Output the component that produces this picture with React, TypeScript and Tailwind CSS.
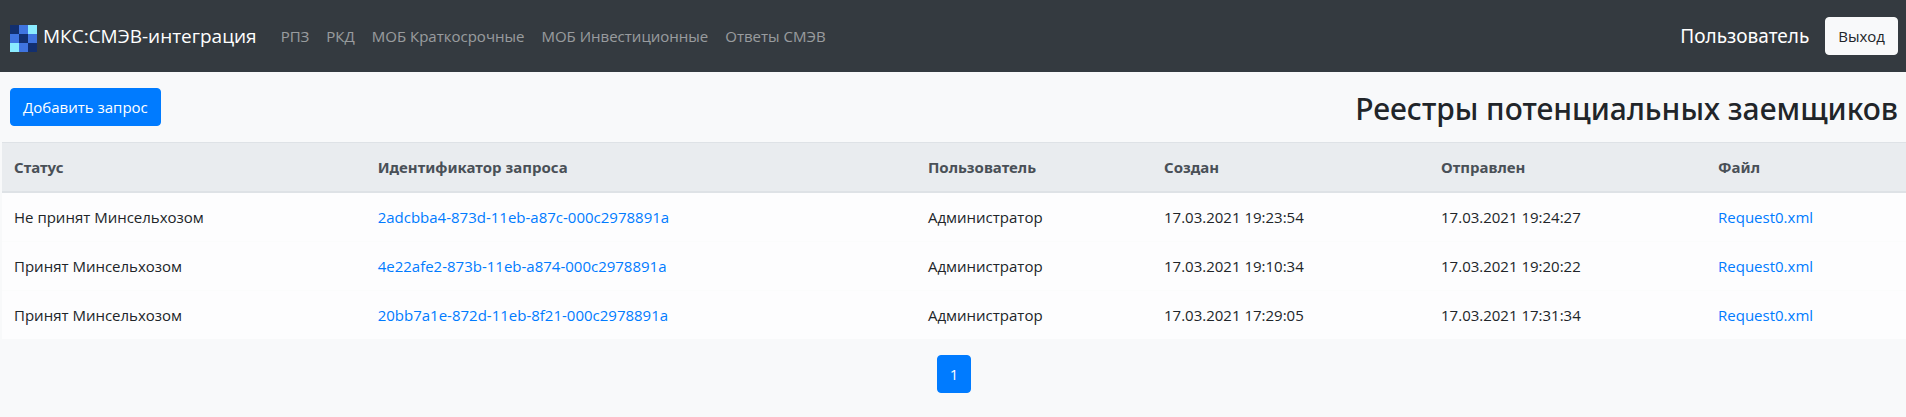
const navLinks = ['РПЗ', 'РКД', 'МОБ Краткосрочные', 'МОБ Инвестиционные', 'Ответы СМЭВ'];

const columns = [
  { title: 'Статус', width: 'w-[19.1%]' },
  { title: 'Идентификатор запроса', width: 'w-[28.9%]' },
  { title: 'Пользователь', width: 'w-[12.4%]' },
  { title: 'Создан', width: 'w-[14.55%]' },
  { title: 'Отправлен', width: 'w-[14.55%]' },
  { title: 'Файл', width: 'w-[10.5%]' },
];

const requests = [
  {
    status: 'Не принят Минсельхозом',
    id: '2adcbba4-873d-11eb-a87c-000c2978891a',
    user: 'Администратор',
    created: '17.03.2021 19:23:54',
    sent: '17.03.2021 19:24:27',
    file: 'Request0.xml',
  },
  {
    status: 'Принят Минсельхозом',
    id: '4e22afe2-873b-11eb-a874-000c2978891a',
    user: 'Администратор',
    created: '17.03.2021 19:10:34',
    sent: '17.03.2021 19:20:22',
    file: 'Request0.xml',
  },
  {
    status: 'Принят Минсельхозом',
    id: '20bb7a1e-872d-11eb-8f21-000c2978891a',
    user: 'Администратор',
    created: '17.03.2021 17:29:05',
    sent: '17.03.2021 17:31:34',
    file: 'Request0.xml',
  },
];

function Logo() {
  return (
    <svg width="27" height="27" viewBox="0 0 3 3" shapeRendering="crispEdges" aria-hidden="true">
      <rect width="3" height="3" fill="#3f74e0" />
      <rect width="1" height="1" fill="#122f6f" />
      <rect x="1" y="1" width="1" height="1" fill="#122f6f" />
      <rect x="2" y="2" width="1" height="1" fill="#122f6f" />
      <rect x="2" width="1" height="1" fill="#8aebff" />
      <rect y="2" width="1" height="1" fill="#8aebff" />
    </svg>
  );
}

function Navbar() {
  return (
    <nav className="flex h-18 items-center bg-[#343a40] pr-2 pl-2.5">
      <a href="#" className="mr-4 flex items-center gap-1.5 text-[19px] leading-[30px] text-white">
        <span className="pt-1">
          <Logo />
        </span>
        МКС:СМЭВ-интеграция
      </a>
      <ul className="flex gap-px">
        {navLinks.map((link) => (
          <li key={link}>
            <a href="#" className="block p-2 text-white/50 hover:text-white/75">
              {link}
            </a>
          </li>
        ))}
      </ul>
      <span className="mr-4 ml-auto font-['Noto_Sans',sans-serif] text-[19px] leading-[30px] text-white">
        Пользователь
      </span>
      <button
        type="button"
        className="rounded border border-[#f8f9fa] bg-[#f8f9fa] px-3 py-1.5 text-[#212529]"
      >
        Выход
      </button>
    </nav>
  );
}

function RequestsTable() {
  return (
    <div className="pl-0.5">
      <table className="w-full table-fixed border-collapse text-left">
        <thead className="bg-[#e9ecef] font-['Noto_Sans',sans-serif] text-[#495057]">
          <tr>
            {columns.map((column) => (
              <th
                key={column.title}
                className={`border-t border-b-2 border-[#dee2e6] p-3 font-bold ${column.width}`}
              >
                {column.title}
              </th>
            ))}
          </tr>
        </thead>
        <tbody className="bg-[#fdfdfe]">
          {requests.map((request) => (
            <tr key={request.id} className="border-t border-[#fbfcfc]">
              <td className="p-3">{request.status}</td>
              <td className="p-3">
                <a href="#" className="text-[#007bff] hover:underline">
                  {request.id}
                </a>
              </td>
              <td className="p-3">{request.user}</td>
              <td className="p-3">{request.created}</td>
              <td className="p-3">{request.sent}</td>
              <td className="p-3">
                <a href="#" className="text-[#007bff] hover:underline">
                  {request.file}
                </a>
              </td>
            </tr>
          ))}
        </tbody>
      </table>
    </div>
  );
}

export default function App() {
  return (
    <div className="min-h-screen bg-[#f8f9fa] font-['Open_Sans','Noto_Sans',sans-serif] text-[15px] leading-6 text-[#212529]">
      <Navbar />

      <main>
        <div className="flex items-end justify-between pt-4 pr-2 pb-4 pl-2.5">
          <button
            type="button"
            className="rounded border border-[#007bff] bg-[#007bff] px-3 py-1.5 text-white"
          >
            Добавить запрос
          </button>
          <h2 className="pt-1 font-['Noto_Sans',sans-serif] text-[30px] leading-[34px] font-medium">
            Реестры потенциальных заемщиков
          </h2>
        </div>

        <RequestsTable />

        <div className="flex justify-center py-4 pl-0.5">
          <button
            type="button"
            className="rounded border border-[#007bff] bg-[#007bff] px-3 py-1.5 text-white"
          >
            1
          </button>
        </div>
      </main>
    </div>
  );
}
